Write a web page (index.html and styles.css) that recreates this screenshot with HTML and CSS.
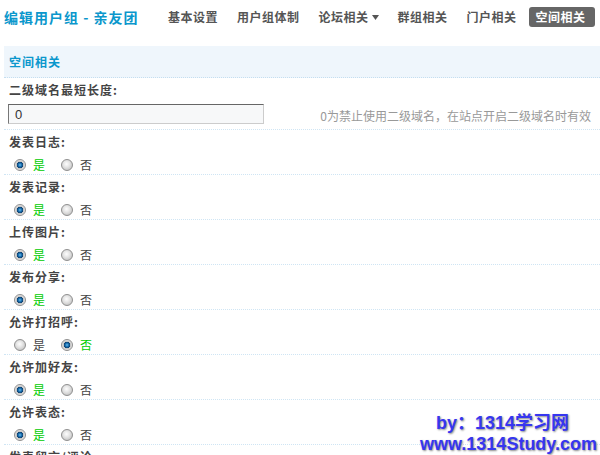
FILE: index.html
```html
<!DOCTYPE html>
<html lang="zh-CN">
<head>
  <meta charset="UTF-8" />
  <title>编辑用户组 - 亲友团</title>
  <link rel="stylesheet" href="styles.css">
</head>
<body>
  <div class="page">
    <div class="top">
      <div class="title">编辑用户组 - 亲友团</div>
      <div class="nav">
        <a href="#">基本设置</a>
        <a href="#">用户组体制</a>
        <a href="#">论坛相关<svg class="caret" width="7" height="5" viewBox="0 0 7 5"><path d="M0 0h7L3.5 5z" fill="#555"/></svg></a>
        <a href="#">群组相关</a>
        <a href="#">门户相关</a>
        <a href="#" class="on">空间相关</a>
      </div>
    </div>

    <div class="sec-head">空间相关</div>

    <div class="row first">
      <div class="label">二级域名最短长度:</div>
      <div class="value">
        <input class="txt" type="text" value="0">
        <span class="tip">0为禁止使用二级域名，在站点开启二级域名时有效</span>
      </div>
    </div>

    <div class="row">
      <div class="label">发表日志:</div>
      <div class="value"><span class="radio on"></span><span class="opt on">是</span><span class="radio"></span><span class="opt">否</span></div>
    </div>
    <div class="row">
      <div class="label">发表记录:</div>
      <div class="value"><span class="radio on"></span><span class="opt on">是</span><span class="radio"></span><span class="opt">否</span></div>
    </div>
    <div class="row">
      <div class="label">上传图片:</div>
      <div class="value"><span class="radio on"></span><span class="opt on">是</span><span class="radio"></span><span class="opt">否</span></div>
    </div>
    <div class="row">
      <div class="label">发布分享:</div>
      <div class="value"><span class="radio on"></span><span class="opt on">是</span><span class="radio"></span><span class="opt">否</span></div>
    </div>
    <div class="row">
      <div class="label">允许打招呼:</div>
      <div class="value"><span class="radio"></span><span class="opt">是</span><span class="radio on"></span><span class="opt on">否</span></div>
    </div>
    <div class="row">
      <div class="label">允许加好友:</div>
      <div class="value"><span class="radio on"></span><span class="opt on">是</span><span class="radio"></span><span class="opt">否</span></div>
    </div>
    <div class="row">
      <div class="label">允许表态:</div>
      <div class="value"><span class="radio on"></span><span class="opt on">是</span><span class="radio"></span><span class="opt">否</span></div>
    </div>
    <div class="row">
      <div class="label">发表留言/评论:</div>
      <div class="value"><span class="radio on"></span><span class="opt on">是</span><span class="radio"></span><span class="opt">否</span></div>
    </div>
  </div>

  <div class="mark">
    <div class="mark-1">by：1314学习网</div>
    <div class="mark-2">www.1314Study.com</div>
  </div>
</body>
</html>
```

FILE: styles.css
```css
* {
  box-sizing: border-box;
}

body {
  margin: 0;
  font-family: "Noto Sans CJK SC", sans-serif;
  font-size: 12px;
  color: #444;
  background: #fff;
  overflow: hidden;
}

.page {
  padding-left: 4px;
}

.top {
  display: flex;
  align-items: center;
  height: 20px;
  margin-top: 7px;
  margin-bottom: 19px;
}

.title {
  width: 157px;
  font-size: 14px;
  font-weight: bold;
  color: #0b97cc;
  letter-spacing: 1px;
  line-height: 20px;
}

.nav {
  display: flex;
  gap: 5px;
}

.nav a {
  display: flex;
  align-items: center;
  padding: 0 7px;
  line-height: 20px;
  color: #555;
  font-weight: bold;
  letter-spacing: 0.5px;
  text-decoration: none;
  border-radius: 3px;
}

.nav a.on {
  background: #666;
  color: #fff;
  padding: 0 9px 0 7px;
}

.caret {
  margin-left: 3px;
}

.sec-head {
  height: 32px;
  line-height: 31px;
  padding-left: 5px;
  background: #eff6fc;
  border-bottom: 1px dotted #c5def0;
  color: #0b97cc;
  font-weight: bold;
  letter-spacing: 1px;
}

.row {
  padding: 4px 0 0 5px;
  border-bottom: 1px dotted #cfe5f4;
}

.label {
  line-height: 16px;
  font-weight: bold;
  color: #444;
  letter-spacing: 1px;
}

.value {
  display: flex;
  align-items: center;
  height: 24px;
  padding-top: 5px;
}

.row.first .value {
  height: 31px;
  padding: 6px 0 5px;
  align-items: flex-end;
}

.txt {
  width: 256px;
  height: 20px;
  margin: 0 0 0 -1px;
  padding: 0 6px;
  border: 1px solid #ccc;
  border-top-color: #666;
  border-left-color: #777;
  background: #f7f8f9;
  font-family: "Liberation Sans", sans-serif;
  font-size: 13px;
  color: #333;
  outline: none;
}

.tip {
  margin-left: auto;
  margin-right: 9px;
  line-height: 16px;
  color: #999;
}

.radio {
  width: 12px;
  height: 12px;
  margin-left: 5px;
  border-radius: 50%;
  border: 1px solid #8f8f8f;
  background: radial-gradient(circle at 45% 40%, #fdfdfd 0, #e6e6e6 3px, #c9c9c9 6px);
}

.radio.on {
  background: radial-gradient(circle at 50% 50%, #6cbcef 0, #1f78b8 1.5px, #0b3f70 3px, #c4c4c4 3.5px, #efefef 5.5px);
}

.opt {
  margin-left: 7px;
  margin-right: 11px;
  color: #444;
}

.opt.on {
  color: #00cc00;
}

.mark {
  position: absolute;
  left: 420px;
  top: 413px;
  font-family: "Liberation Sans", "Noto Sans CJK SC", sans-serif;
  font-size: 18px;
  font-weight: bold;
  line-height: 21px;
  color: #3636f0;
  text-shadow: 1px 1px 2px #8a8a8a, -1px -1px 0 #fff;
  white-space: nowrap;
}

.mark-1 {
  padding-left: 16px;
}
```
